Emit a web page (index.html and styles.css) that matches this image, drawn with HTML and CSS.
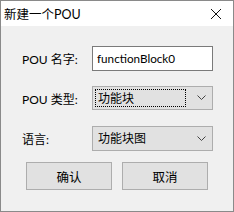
FILE: index.html
```html
<!DOCTYPE html>
<html lang="zh-CN">
<head>
    <meta charset="UTF-8">
    <title>新建一个POU</title>
    <link rel="stylesheet" href="styles.css">
</head>
<body>
    <div class="window">
        <div class="titlebar">
            <span class="title">新建一个POU</span>
            <svg class="close" width="12" height="12" viewBox="0 0 12 12">
                <path d="M1 1 L11 11 M11 1 L1 11" stroke="#111" stroke-width="1" fill="none"/>
            </svg>
        </div>
        <div class="content">
            <div class="row row-name">
                <label class="label">POU 名字:</label>
                <div class="textbox">functionBlock0</div>
            </div>
            <div class="row row-type">
                <label class="label">POU 类型:</label>
                <div class="combo">
                    <span class="combo-text focus">功能块</span>
                    <svg class="arrow" width="9" height="6" viewBox="0 0 9 6">
                        <path d="M0.5 0.5 L4.5 4.5 L8.5 0.5" stroke="#444" stroke-width="1" fill="none"/>
                    </svg>
                </div>
            </div>
            <div class="row row-lang">
                <label class="label">语言:</label>
                <div class="combo">
                    <span class="combo-text">功能块图</span>
                    <svg class="arrow" width="9" height="6" viewBox="0 0 9 6">
                        <path d="M0.5 0.5 L4.5 4.5 L8.5 0.5" stroke="#444" stroke-width="1" fill="none"/>
                    </svg>
                </div>
            </div>
            <div class="buttons">
                <button class="btn">确认</button>
                <button class="btn">取消</button>
            </div>
        </div>
    </div>
</body>
</html>
```

FILE: styles.css
```css
body {
    margin: 0;
    font-family: Lato, "Noto Sans CJK SC", sans-serif;
    font-size: 12px;
    color: #000;
}
.window {
    width: 232px;
    height: 210px;
    border: 1px solid #8a8a8a;
    background-color: #f0f0f0;
}
.titlebar {
    height: 25px;
    background-color: #fff;
    display: flex;
    align-items: center;
    justify-content: space-between;
    padding: 0 11px 0 3px;
}
.title {
    font-size: 12.5px;
}
.close {
    display: block;
}
.content {
    padding: 20px 0 0 20px;
}
.row {
    display: flex;
    align-items: center;
}
.label {
    width: 71px;
    padding-left: 1px;
    box-sizing: border-box;
}
.row-type {
    margin-top: 15px;
}
.row-lang {
    margin-top: 16px;
}
.textbox {
    border: 1px solid #7a7a7a;
    background-color: #fff;
    padding-left: 4px;
    box-sizing: border-box;
    width: 121px;
    height: 25px;
    line-height: 22px;
    font-size: 11.7px;
}
.combo {
    width: 121px;
    height: 25px;
    box-sizing: border-box;
    border: 1px solid #adadad;
    background-color: #e1e1e1;
    display: flex;
    align-items: center;
    justify-content: space-between;
    padding: 2px 6px 2px 2px;
}
.row-type .combo {
    height: 24px;
}
.combo-text {
    flex: 1;
    height: 100%;
    box-sizing: border-box;
    padding-left: 2px;
    line-height: 18px;
    border: 1px dotted transparent;
    margin-right: 11px;
}
.combo-text.focus {
    border-color: #000;
}
.buttons {
    display: flex;
    gap: 10px;
    margin-top: 11px;
    padding-left: 5px;
}
.btn {
    width: 86px;
    height: 28px;
    border: 1px solid #adadad;
    background-color: #e1e1e1;
    font-family: Lato, "Noto Sans CJK SC", sans-serif;
    font-size: 12.5px;
    color: #000;
    padding: 0;
}
```
